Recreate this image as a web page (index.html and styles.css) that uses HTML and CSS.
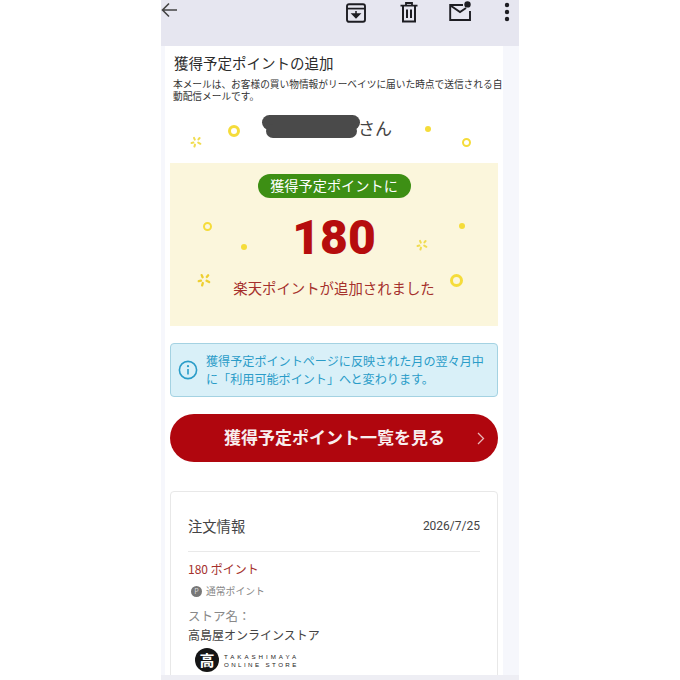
FILE: index.html
```html
<!DOCTYPE html>
<html lang="ja">
<head>
    <meta charset="UTF-8">
    <meta name="viewport" content="width=device-width, initial-scale=1.0">
    <title>獲得予定ポイントの追加</title>
    <link rel="stylesheet" href="styles.css">
</head>
<body>
    <svg class="defs" width="0" height="0">
        <symbol id="sparkle" viewBox="0 0 12 12">
            <path d="M4 1.8 4.8 3.6M9.6 2 8.4 3.4M1.5 7 3.4 6.6M8.2 6.6 10.4 7.8M5 8.6 4.4 10.6" fill="none" stroke="currentColor" stroke-width="2" stroke-linecap="round"/>
        </symbol>
    </svg>

    <div class="phone">
        <div class="toolbar">
            <svg class="tool back" width="17" height="16" viewBox="0 0 17 16"><path d="M16 8H1.5M8 1.5 1.5 8 8 14.5" fill="none" stroke="#444" stroke-width="1.6"/></svg>
            <svg class="tool archive" width="20" height="20" viewBox="0 0 20 20">
                <rect x="1" y="1.2" width="18" height="17.6" rx="2" fill="none" stroke="#1d1d22" stroke-width="1.9"/>
                <path d="M1 5.6H19" stroke="#1d1d22" stroke-width="1.7"/>
                <path d="M10 8v4.5M6.4 11 10 14.6 13.6 11z" fill="#1d1d22" stroke="#1d1d22" stroke-width="1.5"/>
            </svg>
            <svg class="tool trash" width="18" height="21" viewBox="0 0 18 21">
                <path d="M0.5 3.6H17.5M6 3V1H12V3" fill="none" stroke="#1d1d22" stroke-width="1.8"/>
                <path d="M3 4V19.5H15V4M7 7.5V16M11 7.5V16" fill="none" stroke="#1d1d22" stroke-width="2"/>
            </svg>
            <svg class="tool mail" width="23" height="20" viewBox="0 0 23 20">
                <path d="M14 4H1.2V19H21V10M1.5 4.5 11 11 17 7" fill="none" stroke="#1d1d22" stroke-width="1.9"/>
                <circle cx="18.5" cy="3.4" r="3.2" fill="#1d1d22"/>
            </svg>
            <svg class="tool dots" width="6" height="20" viewBox="0 0 6 20">
                <circle cx="3" cy="3" r="2.2" fill="#1d1d22"/>
                <circle cx="3" cy="10" r="2.2" fill="#1d1d22"/>
                <circle cx="3" cy="17" r="2.2" fill="#1d1d22"/>
            </svg>
        </div>

        <div class="mail-body">
            <h1 class="mail-title">獲得予定ポイントの追加</h1>
            <p class="mail-note">本メールは、お客様の買い物情報がリーベイツに届いた時点で送信される自動配信メールです。</p>

            <div class="greeting">
                <span class="redacted"></span>
                <span class="honorific">さん</span>
                <i class="ring ring-a"></i>
                <svg class="spark spark-a"><use href="#sparkle"/></svg>
                <i class="dot dot-a"></i>
                <i class="ring ring-b"></i>
            </div>

            <div class="points">
                <span class="pill">獲得予定ポイントに</span>
                <div class="amount">180</div>
                <div class="points-text">楽天ポイントが追加されました</div>
                <i class="ring ring-c"></i>
                <i class="dot dot-b"></i>
                <i class="dot dot-c"></i>
                <svg class="spark spark-b"><use href="#sparkle"/></svg>
                <svg class="spark spark-c"><use href="#sparkle"/></svg>
                <i class="ring ring-d"></i>
            </div>

            <div class="info">
                <svg class="info-icon" width="20" height="20" viewBox="0 0 20 20">
                    <circle cx="10" cy="10" r="8.6" fill="none" stroke="#2a9cc8" stroke-width="1.6"/>
                    <path d="M10 9v5.5" stroke="#2a9cc8" stroke-width="1.6"/>
                    <circle cx="10" cy="6.2" r="1.1" fill="#2a9cc8"/>
                </svg>
                <p>獲得予定ポイントページに反映された月の翌々月中に「利用可能ポイント」へと変わります。</p>
            </div>

            <div class="cta">
                <span>獲得予定ポイント一覧を見る</span>
                <svg class="cta-arrow" width="8" height="13" viewBox="0 0 8 13"><path d="M1 1 6.5 6.5 1 12" fill="none" stroke="#e8b8b8" stroke-width="1.3"/></svg>
            </div>

            <div class="order">
                <div class="order-head">
                    <span class="order-title">注文情報</span>
                    <span class="order-date">2026/7/25</span>
                </div>
                <div class="order-points">180 ポイント</div>
                <div class="order-type"><i class="p-badge">P</i>通常ポイント</div>
                <div class="store-label">ストア名：</div>
                <div class="store-name">高島屋オンラインストア</div>
                <div class="store-logo">
                    <span class="logo-mark">高</span>
                    <span class="logo-text">
                        <span class="logo-line-a">TAKASHIMAYA</span>
                        <span class="logo-line-b">ONLINE STORE</span>
                    </span>
                </div>
            </div>
        </div>

        <div class="bottom-bar"></div>
    </div>
</body>
</html>
```

FILE: styles.css
```css
* {
    box-sizing: border-box;
}
body {
    margin: 0;
    background: #fff;
    font-family: "Noto Sans CJK JP", "Noto Sans", sans-serif;
    color: #333;
}
p, h1 {
    margin: 0;
}
.defs {
    position: absolute;
}
.phone {
    position: relative;
    width: 358px;
    height: 680px;
    margin-left: 161px;
    background: #f6f7fc;
    overflow: hidden;
}
.toolbar {
    display: flex;
    align-items: flex-start;
    height: 46px;
    background: #e6e6f0;
}
.tool {
    flex: none;
}
.back {
    margin-top: 2px;
}
.archive {
    margin: 3px 0 0 168px;
}
.trash {
    margin: 2px 0 0 34px;
}
.mail {
    margin: 1px 0 0 31px;
}
.dots {
    margin: 2px 0 0 32px;
}

.mail-body {
    width: 338px;
    height: 629px;
    margin-left: 4px;
    padding: 0 5px;
    background: #fff;
}
.mail-title {
    height: 32px;
    padding: 7px 0 0 4px;
    font-size: 14.5px;
    line-height: 20px;
    font-weight: 400;
    color: #2b2b2b;
}
.mail-note {
    margin-right: -5px;
    padding-left: 3px;
    font-size: 9.7px;
    line-height: 12px;
    color: #333;
}

.greeting {
    position: relative;
    height: 61px;
    padding: 14px 0 0 188px;
    font-size: 17px;
    line-height: 24px;
    color: #444;
}
.redacted {
    position: absolute;
    left: 92px;
    top: 13px;
    width: 98px;
    height: 15px;
    background: #4a4a4a;
    border-radius: 8px;
}
.redacted::after {
    content: "";
    position: absolute;
    left: 4px;
    top: 9px;
    width: 91px;
    height: 14px;
    background: #4a4a4a;
    border-radius: 7px;
}
.ring, .dot {
    position: absolute;
    border-radius: 50%;
}
.ring {
    border: 3px solid #f5dc3a;
}
.dot {
    background: #f5dc3a;
}
.spark {
    position: absolute;
    color: #f0dc50;
}
.ring-a {
    left: 58px;
    top: 23px;
    width: 12px;
    height: 12px;
}
.spark-a {
    left: 20px;
    top: 34px;
    width: 12px;
    height: 12px;
}
.dot-a {
    left: 255px;
    top: 24px;
    width: 6px;
    height: 6px;
}
.ring-b {
    left: 292px;
    top: 36px;
    width: 9px;
    height: 9px;
    border-width: 2.5px;
}

.points {
    position: relative;
    display: flex;
    flex-direction: column;
    align-items: center;
    height: 163px;
    padding-top: 11px;
    background: #fbf6dc;
}
.pill {
    width: 153px;
    height: 24px;
    border-radius: 12px;
    background: #3d8f14;
    color: #fff;
    font-size: 14.2px;
    line-height: 23px;
    text-align: center;
}
.amount {
    margin-top: 12px;
    font-family: Roboto, sans-serif;
    font-size: 48px;
    line-height: 55px;
    font-weight: 900;
    color: #b60d0d;
}
.points-text {
    margin-top: 13px;
    font-size: 14.4px;
    line-height: 20px;
    color: #a5302c;
}
.ring-c {
    left: 33px;
    top: 59px;
    width: 9px;
    height: 9px;
    border-width: 2.5px;
}
.dot-b {
    left: 71px;
    top: 81px;
    width: 6px;
    height: 6px;
}
.dot-c {
    left: 289px;
    top: 60px;
    width: 6px;
    height: 6px;
}
.spark-b {
    left: 246px;
    top: 76px;
    width: 12px;
    height: 12px;
}
.spark-c {
    left: 27px;
    top: 110px;
    width: 14px;
    height: 14px;
    color: #eecf30;
}
.ring-d {
    left: 280px;
    top: 111px;
    width: 13px;
    height: 13px;
}

.info {
    display: flex;
    align-items: center;
    height: 54px;
    margin-top: 17px;
    padding: 0 7px;
    background: #d9f0f8;
    border: 1px solid #a4d2e2;
    border-radius: 4px;
}
.info-icon {
    flex: none;
    margin-right: 8px;
}
.info p {
    font-size: 12.1px;
    line-height: 18px;
    color: #2a9cc8;
}

.cta {
    position: relative;
    height: 48px;
    margin-top: 17px;
    padding: 0 0 0 54px;
    background: #b0060e;
    border-radius: 24px;
    color: #f8eeee;
    font-size: 17px;
    line-height: 46px;
    font-weight: 700;
}
.cta-arrow {
    position: absolute;
    right: 13px;
    top: 18px;
}

.order {
    height: 200px;
    margin-top: 29px;
    padding: 0 17px;
    border: 1px solid #e8e8e8;
    border-radius: 4px;
}
.order-head {
    display: flex;
    align-items: center;
    justify-content: space-between;
    height: 60px;
    padding-top: 8px;
    border-bottom: 1px solid #e9e9e9;
}
.order-title {
    font-size: 14.3px;
    color: #444;
}
.order-date {
    font-family: Roboto, sans-serif;
    font-size: 12px;
    color: #444;
}
.order-points {
    margin-top: 8px;
    font-size: 12px;
    line-height: 18px;
    color: #a5302c;
}
.order-type {
    display: flex;
    align-items: center;
    margin-top: 4px;
    padding-left: 3px;
    font-size: 9.8px;
    line-height: 18px;
    color: #888;
}
.p-badge {
    width: 11px;
    height: 11px;
    margin-right: 4px;
    border-radius: 50%;
    background: #777;
    color: #ddd;
    font-size: 7px;
    font-style: normal;
    line-height: 11px;
    text-align: center;
}
.store-label {
    margin-top: 6px;
    font-size: 12.5px;
    line-height: 19px;
    color: #888;
}
.store-name {
    font-size: 12px;
    line-height: 19px;
    color: #444;
}
.store-logo {
    display: flex;
    align-items: center;
    margin: 4px 0 0 7px;
}
.logo-mark {
    width: 24px;
    height: 24px;
    margin-right: 5px;
    border-radius: 50%;
    background: #151515;
    color: #fff;
    font-size: 15px;
    font-weight: 700;
    line-height: 23px;
    text-align: center;
}
.logo-text {
    display: flex;
    flex-direction: column;
    padding-top: 2px;
    font-family: "Liberation Sans", sans-serif;
    font-size: 6.2px;
    line-height: 8px;
    color: #222;
}
.logo-line-a {
    letter-spacing: 2.95px;
}
.logo-line-b {
    letter-spacing: 2.4px;
}

.bottom-bar {
    position: absolute;
    left: 0;
    right: 0;
    bottom: 0;
    height: 5px;
    background: #eeeef4;
}
```
